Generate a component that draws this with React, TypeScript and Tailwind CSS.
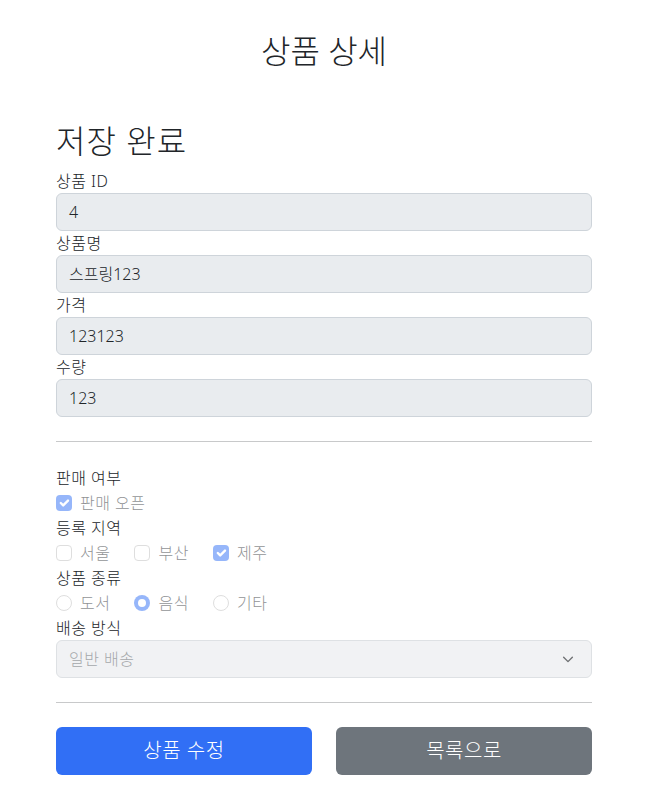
const FONT = "font-['Noto_Sans','Noto_Sans_CJK_KR',sans-serif]";

const fields = [
  { label: '상품 ID', value: '4' },
  { label: '상품명', value: '스프링123' },
  { label: '가격', value: '123123' },
  { label: '수량', value: '123' },
];

function CheckBox({ checked, label }: { checked?: boolean; label: string }) {
  return (
    <div className="flex items-center h-[26px] opacity-50">
      {checked ? (
        <span className="w-4 h-4 rounded-[4px] bg-[#2f6ff6] flex items-center justify-center">
          <svg viewBox="0 0 20 20" className="w-4 h-4">
            <path d="M6 10l3 3l6-6" fill="none" stroke="#fff" strokeWidth="3" strokeLinecap="round" strokeLinejoin="round" />
          </svg>
        </span>
      ) : (
        <span className="w-4 h-4 rounded-[4px] border border-[#bfbfbf] bg-white" />
      )}
      <span className="ml-2 text-[#212529] text-[16px] leading-6 tracking-[0.5px]">{label}</span>
    </div>
  );
}

function Radio({ checked, label }: { checked?: boolean; label: string }) {
  return (
    <div className="flex items-center h-[26px] opacity-50">
      {checked ? (
        <span className="w-4 h-4 rounded-full bg-[#2f6ff6] flex items-center justify-center">
          <span className="w-2 h-2 rounded-full bg-white" />
        </span>
      ) : (
        <span className="w-4 h-4 rounded-full border border-[#bfbfbf] bg-white" />
      )}
      <span className="ml-2 text-[#212529] text-[16px] leading-6 tracking-[0.5px]">{label}</span>
    </div>
  );
}

export default function App() {
  return (
    <div className={`w-[648px] bg-white text-[#212529] font-light ${FONT}`}>
      <div className="max-w-[560px] mx-auto px-3 pb-[22px]">
        <div className="pt-8 text-center">
          <h2 className="text-[32px] leading-[38px] font-light">상품 상세</h2>
        </div>

        <h2 className="mt-[52px] mb-[9px] text-[32px] leading-[38px] font-light tracking-[1px]">저장 완료</h2>

        {fields.map((f) => (
          <div key={f.label}>
            <div className="text-[16px] leading-6 tracking-[0.5px]">{f.label}</div>
            <div className="h-[38px] rounded-[6px] border border-[#ced4da] bg-[#e9ecef] px-3 flex items-center text-[16px]">
              {f.value}
            </div>
          </div>
        ))}

        <hr className="my-6 border-0 border-t border-[#c8c9ca]" />

        <div className="text-[16px] leading-6 tracking-[0.5px]">판매 여부</div>
        <CheckBox checked label="판매 오픈" />

        <div className="text-[16px] leading-6 tracking-[0.5px]">등록 지역</div>
        <div className="flex gap-6">
          <CheckBox label="서울" />
          <CheckBox label="부산" />
          <CheckBox checked label="제주" />
        </div>

        <div className="text-[16px] leading-6 tracking-[0.5px]">상품 종류</div>
        <div className="flex gap-6">
          <Radio label="도서" />
          <Radio checked label="음식" />
          <Radio label="기타" />
        </div>

        <div className="text-[16px] leading-6 tracking-[0.5px]">배송 방식</div>
        <div className="h-[38px] rounded-[6px] border border-[#dee1e4] bg-[#f1f2f4] pl-3 pr-4 flex items-center justify-between text-[16px] text-[#a5a8ab] tracking-[0.5px]">
          <span>일반 배송</span>
          <svg viewBox="0 0 16 16" className="w-[14px] h-[14px]">
            <path d="M3 6l5 5 5-5" fill="none" stroke="#6f7173" strokeWidth="1.6" strokeLinecap="round" strokeLinejoin="round" />
          </svg>
        </div>

        <hr className="my-6 border-0 border-t border-[#c8c9ca]" />

        <div className="grid grid-cols-2 gap-6">
          <button className="h-12 rounded-[6px] bg-[#316ff5] text-white text-[20px] tracking-[0.5px]">상품 수정</button>
          <button className="h-12 rounded-[6px] bg-[#6e757c] text-white text-[20px] tracking-[0.5px]">목록으로</button>
        </div>
      </div>
    </div>
  );
}
